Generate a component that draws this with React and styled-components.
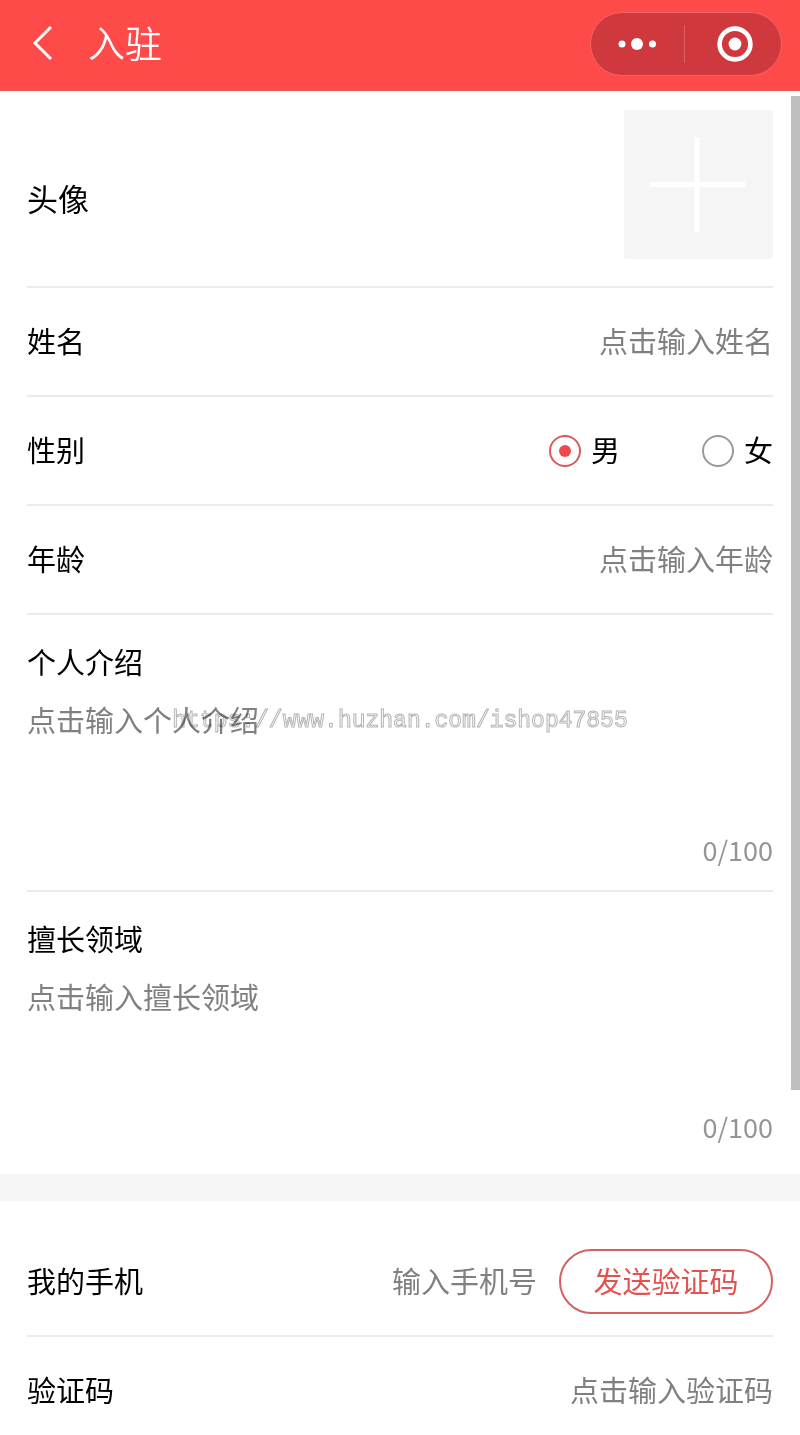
import React, { useState } from "react";
import styled, { createGlobalStyle, css } from "styled-components";

const red = "#ff4a4a";
const line = "#ebebeb";
const hint = "#808080";

const GlobalStyle = createGlobalStyle`
  * {
    box-sizing: border-box;
  }

  body {
    margin: 0;
    background: #fff;
  }

  body, input, textarea, button {
    font-family: "Noto Sans CJK SC", sans-serif;
    font-size: 29px;
    line-height: 42px;
    color: #000;
  }
`;

const Page = styled.div`
  position: relative;
  display: flex;
  flex-direction: column;
  height: 100vh;
  overflow: hidden;
`;

const Header = styled.header`
  display: flex;
  flex: none;
  align-items: center;
  height: 91px;
  padding: 0 18px 2px 27px;
  background: ${red};
  border-bottom: 1px solid #e85555;
`;

const BackButton = styled.button`
  display: flex;
  padding: 0;
  border: 0;
  background: none;
  cursor: pointer;
`;

const Title = styled.h1`
  flex: 1;
  margin: 0 0 0 29px;
  padding-bottom: 4px;
  font-size: 37px;
  font-weight: 350;
  line-height: 54px;
  color: #fff;
`;

const Capsule = styled.div`
  display: flex;
  align-items: center;
  width: 192px;
  height: 64px;
  border: 1px solid #f06464;
  border-radius: 32px;
  background: #cf383c;
`;

const CapsuleButton = styled.button`
  display: flex;
  flex: 1;
  align-items: center;
  justify-content: center;
  height: 38px;
  padding: 0 0 0 ${({ $shift }) => ($shift ? "4px" : 0)};
  border: 0;
  background: none;
  cursor: pointer;

  & + & {
    border-left: 1px solid #dc6063;
  }
`;

const Form = styled.form`
  flex: 1;
  min-height: 0;
  overflow-y: auto;
  scrollbar-width: none;
`;

const Group = styled.section`
  padding: ${({ $top }) => $top || 0}px 27px 0;

  & + & {
    border-top: 27px solid #f6f6f6;
  }
`;

const divider = css`
  border-bottom: 2px solid ${line};

  &:last-child {
    border-bottom-color: transparent;
  }
`;

const Row = styled.div`
  display: flex;
  align-items: center;
  justify-content: space-between;
  min-height: 109px;
  ${divider}
`;

const AvatarRow = styled(Row)`
  padding: 19px 0 27px;
`;

// the font sits low in its line box, so row text gets a little room below
const Text = styled.span`
  flex: none;
  padding-bottom: 4px;
`;

const Label = styled.label`
  flex: none;
`;

const AvatarLabel = styled.span`
  padding-top: 26px;
  font-size: 31px;
`;

const Upload = styled.button`
  display: flex;
  padding: 0;
  border: 0;
  border-radius: 3px;
  background: #f5f5f5;
  cursor: pointer;
`;

const inputStyle = css`
  padding: 0;
  border: 0;
  outline: 0;
  background: none;

  &::placeholder {
    color: ${hint};
    opacity: 1;
  }
`;

const Input = styled.input`
  ${inputStyle}
  flex: 1;
  min-width: 0;
  height: 46px;
  padding-bottom: 4px;
  text-align: right;
`;

const Radios = styled.div`
  display: flex;
  gap: 82px;
`;

const RadioLabel = styled.label`
  display: flex;
  align-items: center;
  gap: 10px;
`;

const Radio = styled.input`
  display: grid;
  place-content: center;
  width: 32px;
  height: 32px;
  margin: 0;
  border: 2px solid #999;
  border-radius: 50%;
  appearance: none;

  &:checked {
    border-color: #dc5a5a;
  }

  &:checked::before {
    content: "";
    width: 12px;
    height: 12px;
    border-radius: 50%;
    background: #f04848;
  }
`;

const TextBlock = styled.div`
  display: flex;
  flex-direction: column;
  padding: 25px 0 22px;
  ${divider}

  &:last-child {
    padding-bottom: 27px;
  }
`;

const TextArea = styled.textarea`
  ${inputStyle}
  height: 134px;
  margin-top: 16px;
  resize: none;
`;

const Count = styled.span`
  align-self: flex-end;
  font-size: 27px;
  line-height: 36px;
  color: #959595;
`;

const CodeButton = styled.button`
  width: 214px;
  height: 65px;
  margin-left: 22px;
  padding: 0 0 4px;
  border: 2px solid #d65f5f;
  border-radius: 33px;
  background: none;
  color: #e2524f;
  cursor: pointer;
`;

const ScrollThumb = styled.div`
  position: absolute;
  top: 96px;
  right: 0;
  width: 9px;
  height: 994px;
  background: #c0bfbd;
`;

const Watermark = styled.div`
  position: absolute;
  inset: 0;
  display: grid;
  place-items: center;
  padding-top: 6px;
  font-family: "Liberation Mono", monospace;
  font-size: 23px;
  color: #fff;
  -webkit-text-stroke: 1px #b4b4b4;
  mix-blend-mode: multiply;
  pointer-events: none;
`;

const Field = ({ id, label, placeholder, type = "text", children }) => (
  <Row>
    <Text as="label" htmlFor={id}>{label}</Text>
    <Input id={id} type={type} placeholder={placeholder} />
    {children}
  </Row>
);

const LongField = ({ id, label, placeholder, max = 100 }) => {
  const [value, setValue] = useState("");

  return (
    <TextBlock>
      <Label htmlFor={id}>{label}</Label>
      <TextArea
        id={id}
        placeholder={placeholder}
        maxLength={max}
        value={value}
        onChange={(e) => setValue(e.target.value)}
      />
      <Count>{value.length}/{max}</Count>
    </TextBlock>
  );
};

const App = () => {
  const [gender, setGender] = useState("男");

  return (
    <Page>
      <GlobalStyle />
      <Header>
        <BackButton type="button" aria-label="返回">
          <svg width="32" height="40" viewBox="0 0 32 40" fill="none" stroke="#fff" strokeWidth="3">
            <path d="M24 3 L8 19 L24 35" />
          </svg>
        </BackButton>
        <Title>入驻</Title>
        <Capsule>
          <CapsuleButton type="button" aria-label="更多">
            <svg width="40" height="14" viewBox="0 0 40 14" fill="#fff">
              <circle cx="5" cy="7" r="3.5" />
              <circle cx="20" cy="7" r="6" />
              <circle cx="35.5" cy="7" r="3.5" />
            </svg>
          </CapsuleButton>
          <CapsuleButton type="button" aria-label="关闭" $shift>
            <svg width="38" height="38" viewBox="0 0 38 38">
              <circle cx="19" cy="19" r="15.4" fill="none" stroke="#fff" strokeWidth="4.6" />
              <circle cx="19" cy="19" r="6.4" fill="#fff" />
            </svg>
          </CapsuleButton>
        </Capsule>
      </Header>

      <Form>
        <Group>
          <AvatarRow>
            <AvatarLabel>头像</AvatarLabel>
            <Upload type="button" aria-label="上传头像">
              <svg width="149" height="149" viewBox="0 0 149 149" stroke="#fff" strokeWidth="5">
                <path d="M26 74.5 H121 M73 27 V122" />
              </svg>
            </Upload>
          </AvatarRow>
          <Field id="name" label="姓名" placeholder="点击输入姓名" />
          <Row role="radiogroup" aria-label="性别">
            <Text>性别</Text>
            <Radios>
              {["男", "女"].map((item) => (
                <RadioLabel key={item}>
                  <Radio
                    type="radio"
                    name="gender"
                    checked={gender === item}
                    onChange={() => setGender(item)}
                  />
                  <Text>{item}</Text>
                </RadioLabel>
              ))}
            </Radios>
          </Row>
          <Field id="age" label="年龄" placeholder="点击输入年龄" />
          <LongField id="intro" label="个人介绍" placeholder="点击输入个人介绍" />
          <LongField id="skill" label="擅长领域" placeholder="点击输入擅长领域" />
        </Group>

        <Group $top={27}>
          <Field id="phone" label="我的手机" placeholder="输入手机号" type="tel">
            <CodeButton type="button">发送验证码</CodeButton>
          </Field>
          <Field id="code" label="验证码" placeholder="点击输入验证码" />
        </Group>
      </Form>

      <ScrollThumb />
      <Watermark>https://www.huzhan.com/ishop47855</Watermark>
    </Page>
  );
};

export default App;
